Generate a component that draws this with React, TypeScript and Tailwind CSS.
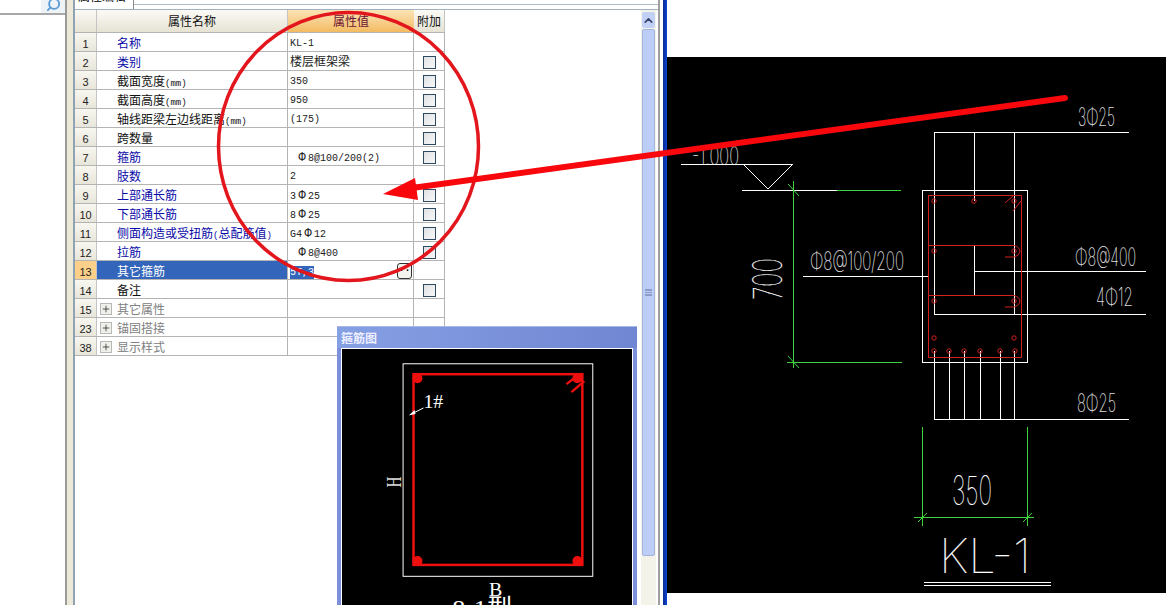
import React from 'react';
import { Search, Plus, ChevronUp } from 'lucide-react';

type Row = { no: string; name: string; value?: string; blue?: boolean; check?: boolean; group?: boolean; selected?: boolean };

const rows: Row[] = [
  { no: '1', name: '名称', value: 'KL-1', blue: true },
  { no: '2', name: '类别', value: '楼层框架梁', blue: true, check: true },
  { no: '3', name: '截面宽度(mm)', value: '350', check: true },
  { no: '4', name: '截面高度(mm)', value: '950', check: true },
  { no: '5', name: '轴线距梁左边线距离(mm)', value: '(175)', check: true },
  { no: '6', name: '跨数量', check: true },
  { no: '7', name: '箍筋', value: ' Φ8@100/200(2)', blue: true, check: true },
  { no: '8', name: '肢数', value: '2', blue: true },
  { no: '9', name: '上部通长筋', value: '3Φ25', blue: true, check: true },
  { no: '10', name: '下部通长筋', value: '8Φ25', blue: true, check: true },
  { no: '11', name: '侧面构造或受扭筋(总配筋值)', value: 'G4Φ12', blue: true, check: true },
  { no: '12', name: '拉筋', value: ' Φ8@400', blue: true, check: true },
  { no: '13', name: '其它箍筋', value: '5T,3', selected: true },
  { no: '14', name: '备注', check: true },
  { no: '15', name: '其它属性', group: true },
  { no: '23', name: '锚固搭接', group: true },
  { no: '38', name: '显示样式', group: true },
];

const tableFont = "font-['Liberation_Mono','Noto_Sans_CJK_SC',monospace]";

// latin bits in the property names are set smaller than the hanzi
const renderName = (name: string) =>
  name.split(/([()a-z]+)/).map((part, i) =>
    /^[()a-z]+$/.test(part) ? <span key={i} className="text-[9px]">{part}</span> : part
  );

const renderValue = (value: string) =>
  value.split(/(Φ|[\u4e00-\u9fff]+)/).map((part, i) => {
    if (part === 'Φ') return <span key={i} className="inline-block w-[12px] text-center text-[12px] leading-none">{part}</span>;
    if (/[\u4e00-\u9fff]/.test(part)) return <span key={i} className="text-[12px] leading-none">{part}</span>;
    return <span key={i}>{part}</span>;
  });

const PropRow = ({ row }: { row: Row }) => {
  const nameColor = row.selected ? 'text-white' : row.group ? 'text-[#808080]' : row.blue ? 'text-[#0a0aa8]' : 'text-[#111]';
  return (
    <div className="grid grid-cols-[22px_191px_126px_31px] grid-rows-[18px] h-[19px] border-b border-[#b4b4b4]">
      <div className={`flex items-center justify-center text-[11px] font-['Liberation_Sans',sans-serif] text-[#222] border-r border-[#c4c4c4] ${row.selected ? 'bg-[#fdd08a]' : 'bg-gradient-to-b from-[#f8f7f0] to-[#e8e6da]'}`}>
        <span className="mt-[4px]">{row.no}</span>
      </div>
      <div className={`flex items-center text-[12px] border-r border-[#b4b4b4] ${row.selected ? 'bg-[#3366bb]' : ''} ${nameColor}`}>
        {row.group ? (
          <span className="w-[12px] h-[12px] mt-[2px] ml-[3px] mr-[5px] flex items-center justify-center bg-[#f0f0ea] border border-[#b8b8b8] text-black">
            <Plus size={10} strokeWidth={1.5} />
          </span>
        ) : (
          <span className="w-[20px]" />
        )}
        <span className="mt-[6px] whitespace-nowrap">{renderName(row.name)}</span>
      </div>
      <div className="flex items-center pl-[2px] pr-px text-[10px] text-[#222] border-r border-[#b4b4b4] whitespace-pre">
        {row.selected ? (
          <>
            <span className="mt-[4px] bg-[#3366bb] text-white leading-[13px]">{row.value}</span>
            <span className="ml-auto w-[15px] h-[16px] mt-px flex items-center justify-center rounded-[3px] border border-[#333] bg-[#f4f4ee] font-bold leading-none text-black">
              ··
            </span>
          </>
        ) : (
          <span className="mt-[4px] leading-none">{row.value && renderValue(row.value)}</span>
        )}
      </div>
      <div className="flex items-center justify-center border-r border-[#b4b4b4]">
        {row.check && <span className="w-[13px] h-[13px] mt-[3px] border border-[#2f4a60] bg-gradient-to-br from-[#dfe2e4] to-[#f8f8f8]" />}
      </div>
    </div>
  );
};

const PropTable = () => (
  <div className={`w-[370px] ${tableFont}`}>
    <div className="grid grid-cols-[22px_191px_126px_31px] h-[23px] text-[12px] border-b border-[#b4b4b4]">
      <div className="bg-gradient-to-b from-[#fbfaf5] to-[#e6e3d4] border-r border-[#c4c4c4]" />
      <div className="flex items-center justify-center pt-[4px] text-[#111] bg-gradient-to-b from-[#fbfaf5] to-[#e6e3d4] border-r border-[#c4c4c4]">属性名称</div>
      <div className="flex items-center justify-center pt-[4px] text-[#6a1030] bg-gradient-to-b from-[#fbe3b4] to-[#f3bb62]">属性值</div>
      <div className="flex items-center justify-center pt-[4px] text-[#111] bg-gradient-to-b from-[#fbfaf5] to-[#e6e3d4] border-r border-[#c4c4c4]">附加</div>
    </div>
    {rows.map(r => <PropRow key={r.no} row={r} />)}
  </div>
);

const Scrollbar = () => (
  <div className="w-[15px] flex flex-col bg-[#f3f3ea] px-px">
    <div className="h-[16px] mt-[2px] flex items-center justify-center bg-[#c3d1f6] rounded-[2px] text-[#34406e]">
      <ChevronUp size={13} strokeWidth={3} />
    </div>
    <div className="mt-px h-[527px] flex items-center justify-center bg-[#bccdf8] border border-[#a3b4dc] rounded-[2px]">
      <div className="w-[7px] h-[7px] border-y border-[#8d9cc8] bg-[linear-gradient(#8d9cc8_1px,transparent_1px)] bg-[length:100%_2px]" />
    </div>
  </div>
);

type CadTextProps = { x: number; y: number; w: number; size: number; children: string };

const CadText = ({ x, y, w, size, children }: CadTextProps) => (
  <text x={x} y={y} textLength={w} lengthAdjust="spacingAndGlyphs" fontSize={size} fill="#fff" stroke="#fff" strokeWidth={0.2} fontWeight={100} fontFamily="Inter, 'Liberation Sans', sans-serif">
    {children}
  </text>
);

const Bar = ({ x, y }: { x: number; y: number }) => <circle cx={x} cy={y} r={2.2} fill="none" stroke="#d02020" strokeWidth={1} />;

const BeamDrawing = () => (
  <svg className="block w-[499px] h-[536px] bg-black" viewBox="667 57 499 536">
    <g stroke="#fff" strokeWidth={1} fill="none" shapeRendering="crispEdges">
      <path d="M681 164.5H793M742 190.5H837" />
      <path d="M934.5 201V314.5H1146M974.5 201V132M1014.5 132V314M934.5 201V132.5H1129" />
      <path d="M974.5 245V295M974.5 271.5H1146M803 276.5H929" />
      <rect x={922.5} y={190.5} width={105} height={172} />
      <path d="M934.5 351V419.5H1129M949.5 351V419M964.5 351V419M980.5 351V419M1000.5 351V419M1014.5 351V419" />
      <path d="M924 582.5H1051M924 585.5H1051" />
    </g>
    <path d="M743 164L768 189L793 164" stroke="#fff" fill="none" />
    <g stroke="#3fd43f" strokeWidth={1} fill="none">
      <path d="M837 190.5H901M793.5 181V368M787 362.5H902" />
      <path d="M788 184L799 196M788 356L799 368" />
      <path d="M922.5 427V526M1027.5 427V526M914 517.5H1034M918 522L927 513M1023 522L1032 513" />
    </g>
    <g stroke="#d02020" strokeWidth={1} fill="none">
      <rect x={928.5} y={195.5} width={93} height={162} />
      <path d="M928 245.5H1014Q1020 247 1020 252Q1019 256 1014 257H1005M928 295.5H1014Q1020 297 1020 302Q1019 306 1014 307H1005M1005 203L1014 195M1013 211L1021 201" />
    </g>
    {[[934, 201], [974, 201], [1014, 201], [934, 251], [1014, 251], [934, 301], [1014, 301], [934, 338], [1014, 338], [934, 351], [949, 351], [964, 351], [980, 351], [1000, 351], [1015, 351]].map(([x, y]) => (
      <Bar key={`${x}-${y}`} x={x} y={y} />
    ))}
    <CadText x={692} y={165} w={47} size={25}>-1.000</CadText>
    <CadText x={1078} y={126} w={37} size={25}>3Φ25</CadText>
    <CadText x={810} y={270} w={94} size={25}>Φ8@100/200</CadText>
    <CadText x={1075} y={266} w={61} size={25}>Φ8@400</CadText>
    <CadText x={1096} y={306} w={37} size={25}>4Φ12</CadText>
    <CadText x={1077} y={412} w={39} size={25}>8Φ25</CadText>
    <CadText x={952} y={505} w={40} size={40}>350</CadText>
    <CadText x={939} y={573} w={92} size={47}>KL-1</CadText>
    <g transform="translate(782 300) rotate(-90)">
      <CadText x={0} y={0} w={42} size={40}>700</CadText>
    </g>
  </svg>
);

const StirrupDialog = () => (
  <div className="absolute left-[337px] top-[326px] w-[300px] h-[279px] overflow-hidden flex flex-col bg-[#7c90da] border-t border-[#a9b8ea] px-[4px]">
    <div className="h-[21px] -mx-[4px] px-[4px] flex items-center bg-gradient-to-r from-[#86a0e4] to-[#7186d2] text-[12px] font-bold text-[#eef] font-['Noto_Sans_CJK_SC',sans-serif]">
      箍筋图
    </div>
    <svg className="block w-[292px] h-[257px] bg-black border-t border-x border-white" viewBox="341 348 292 257">
      <rect x={402.5} y={362.5} width={191} height={214} fill="none" stroke="#fff" />
      <rect x={413} y={373} width={170} height={192} fill="none" stroke="#f00f0f" strokeWidth={2.5} />
      {[[417, 377], [578, 377], [417, 561], [578, 561]].map(([x, y]) => <circle key={`${x}-${y}`} cx={x} cy={y} r={5} fill="#f00f0f" />)}
      <path d="M567 383L580 373M572 391L585 380" stroke="#f00f0f" strokeWidth={2.5} />
      <path d="M409 414L423 407" stroke="#fff" />
      <path d="M409 414L414 409L415 413Z" fill="#fff" />
      <g fontFamily="'Liberation Serif', serif" fill="#fff">
        <text x={423} y={407} fontSize={20} textLength={20} lengthAdjust="spacingAndGlyphs">1#</text>
        <text x={0} y={0} fontSize={22} textLength={11} lengthAdjust="spacingAndGlyphs" fill="#ddd" transform="translate(400 487) rotate(-90)">H</text>
        <text x={489} y={596} fontSize={20}>B</text>
        <text x={452} y={616} fontSize={24} textLength={61} lengthAdjust="spacingAndGlyphs" fontFamily="'Liberation Serif', 'Noto Sans CJK SC', serif">8-1型</text>
      </g>
    </svg>
  </div>
);

const Annotation = () => (
  <svg className="absolute inset-0 w-[1166px] h-[605px] pointer-events-none" viewBox="0 0 1166 605">
    <ellipse cx={348.5} cy={146.5} rx={130} ry={134} fill="none" stroke="#e2161c" strokeWidth={3.5} />
    <path d="M1065 98L412 188" stroke="#f8080c" strokeWidth={6} strokeLinecap="round" />
    <path d="M383 194L415 178L418 200Z" fill="#f8080c" />
  </svg>
);

export default function App() {
  return (
    <div className="relative flex w-[1166px] h-[605px] overflow-hidden bg-white font-['Noto_Sans_CJK_SC',sans-serif]">
      <div className="w-[65px] shrink-0">
        <div className="h-[15px] flex justify-end border-b-2 border-[#a8a8a8]">
          <div className="w-[24px] flex justify-center overflow-hidden bg-[#eef3f8] text-[#5b9bd5]">
            <Search size={15} strokeWidth={3} className="-scale-x-100 -mt-[3px]" />
          </div>
        </div>
      </div>

      <div className="w-[602px] shrink-0 flex">
        <div className="w-[2px] bg-[#9a9a9a]" />
        <div className="w-[6px] bg-[#ece9d8]" />
        <div className="w-[2px] bg-[#8fa3b5]" />
        <div className="flex-1 flex flex-col min-w-0">
          <div className="h-[10px] flex overflow-hidden border-b border-[#9fb0bf]">
            <div className="w-[59px] h-[9px] pl-[3px] border-r border-[#888] text-[12px] leading-none whitespace-nowrap">
              <div className="-mt-[10px]">属性编辑</div>
            </div>
            <div className="flex-1 h-[5px] border-b border-[#b0bcc8]" />
          </div>
          <div className="flex-1 flex min-h-0">
            <div className="w-[566px]"><PropTable /></div>
            <Scrollbar />
            <div className="w-[2px]" />
          </div>
        </div>
        <div className="w-[2px] bg-[#a0a0a0]" />
        <div className="w-[3px] bg-white" />
        <div className="w-[4px] bg-gradient-to-r from-[#0a2a90] to-[#0a44d8]" />
      </div>

      <div className="flex-1 pt-[57px]">
        <BeamDrawing />
      </div>

      <StirrupDialog />
      <Annotation />
    </div>
  );
}
